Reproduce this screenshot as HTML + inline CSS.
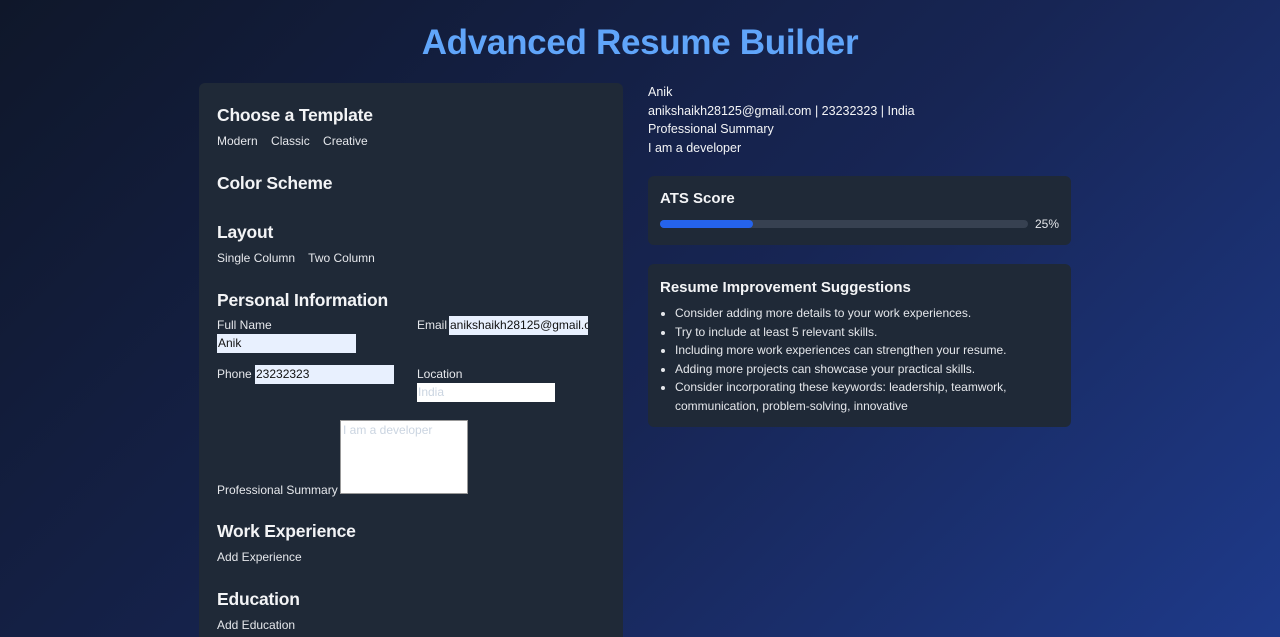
<!DOCTYPE html>
<html><head><style>
*{margin:0;padding:0;box-sizing:border-box}
html,body{width:1280px;height:637px;overflow:hidden}
body{background:linear-gradient(135deg,#0f172a 0%,#172554 55%,#1e3a8a 100%);font-family:"Liberation Sans",sans-serif;color:#e5e7eb;position:relative}
.a{position:absolute;white-space:nowrap}
h1{position:absolute;left:0;width:1280px;top:23px;text-align:center;font-size:35px;font-weight:bold;color:#60a5fa;letter-spacing:-0.3px}
.panel{position:absolute;left:199px;top:83px;width:424px;height:554px;background:#1f2937;border-radius:6px 6px 0 0}
.h{font-size:17.5px;color:#f3f4f6;font-weight:bold;letter-spacing:-0.2px}
.t{font-size:12px;color:#e5e7eb}
.inp{position:absolute;background:#e8f0fe;height:19px;font-size:12px;color:#111;line-height:19px;overflow:hidden;white-space:nowrap;padding-left:1px}
.card{position:absolute;left:648px;width:423px;background:#1f2937;border-radius:6px}
ul{list-style:disc;padding-left:27px;font-size:12px;line-height:18.5px;color:#e5e7eb}
</style></head><body>
<h1>Advanced Resume Builder</h1>
<div class="panel"></div>
<div class="a h" style="left:217px;top:105px">Choose a Template</div>
<div class="a t" style="left:217px;top:134px">Modern &nbsp;&nbsp; Classic &nbsp;&nbsp; Creative</div>
<div class="a h" style="left:217px;top:173px">Color Scheme</div>
<div class="a h" style="left:217px;top:222px">Layout</div>
<div class="a t" style="left:217px;top:251px">Single Column &nbsp;&nbsp; Two Column</div>
<div class="a h" style="left:217px;top:290px">Personal Information</div>
<div class="a t" style="left:217px;top:318px">Full Name</div>
<div class="inp" style="left:217px;top:334px;width:139px">Anik</div>
<div class="a t" style="left:417px;top:318px">Email</div>
<div class="inp" style="left:449px;top:316px;width:139px">anikshaikh28125@gmail.com</div>
<div class="a t" style="left:217px;top:367px">Phone</div>
<div class="inp" style="left:255px;top:365px;width:139px">23232323</div>
<div class="a t" style="left:417px;top:367px">Location</div>
<div class="inp" style="left:417px;top:383px;width:138px;background:#fff;color:#cbd5e1">India</div>
<div class="a" style="left:340px;top:420px;width:128px;height:74px;background:#fff;border:1px solid #999;font-size:12px;color:#cbd5e1;padding:2px">I am a developer</div>
<div class="a t" style="left:217px;top:483px">Professional Summary</div>
<div class="a h" style="left:217px;top:521px">Work Experience</div>
<div class="a t" style="left:217px;top:550px">Add Experience</div>
<div class="a h" style="left:217px;top:589px">Education</div>
<div class="a t" style="left:217px;top:618px">Add Education</div>

<div class="a" style="left:648px;top:83px;font-size:12.5px;line-height:18.5px;color:#f3f4f6">Anik<br>anikshaikh28125@gmail.com | 23232323 | India<br>Professional Summary<br>I am a developer</div>
<div class="card" style="top:176px;height:69px">
<div class="a" style="left:12px;top:14px;font-size:15px;font-weight:bold;color:#f3f4f6">ATS Score</div>
<div class="a" style="left:12px;top:44px;width:368px;height:8px;background:#374151;border-radius:4px"><div style="width:93px;height:8px;background:#2563eb;border-radius:4px"></div></div>
<div class="a" style="left:387px;top:41px;font-size:12px">25%</div>
</div>
<div class="card" style="top:264px;height:163px">
<div class="a" style="left:12px;top:15px;font-size:15px;font-weight:bold;color:#f3f4f6">Resume Improvement Suggestions</div>
<ul style="position:absolute;left:0;top:40px;width:400px">
<li>Consider adding more details to your work experiences.</li>
<li>Try to include at least 5 relevant skills.</li>
<li>Including more work experiences can strengthen your resume.</li>
<li>Adding more projects can showcase your practical skills.</li>
<li>Consider incorporating these keywords: leadership, teamwork, communication, problem-solving, innovative</li>
</ul>
</div>
</body></html>
